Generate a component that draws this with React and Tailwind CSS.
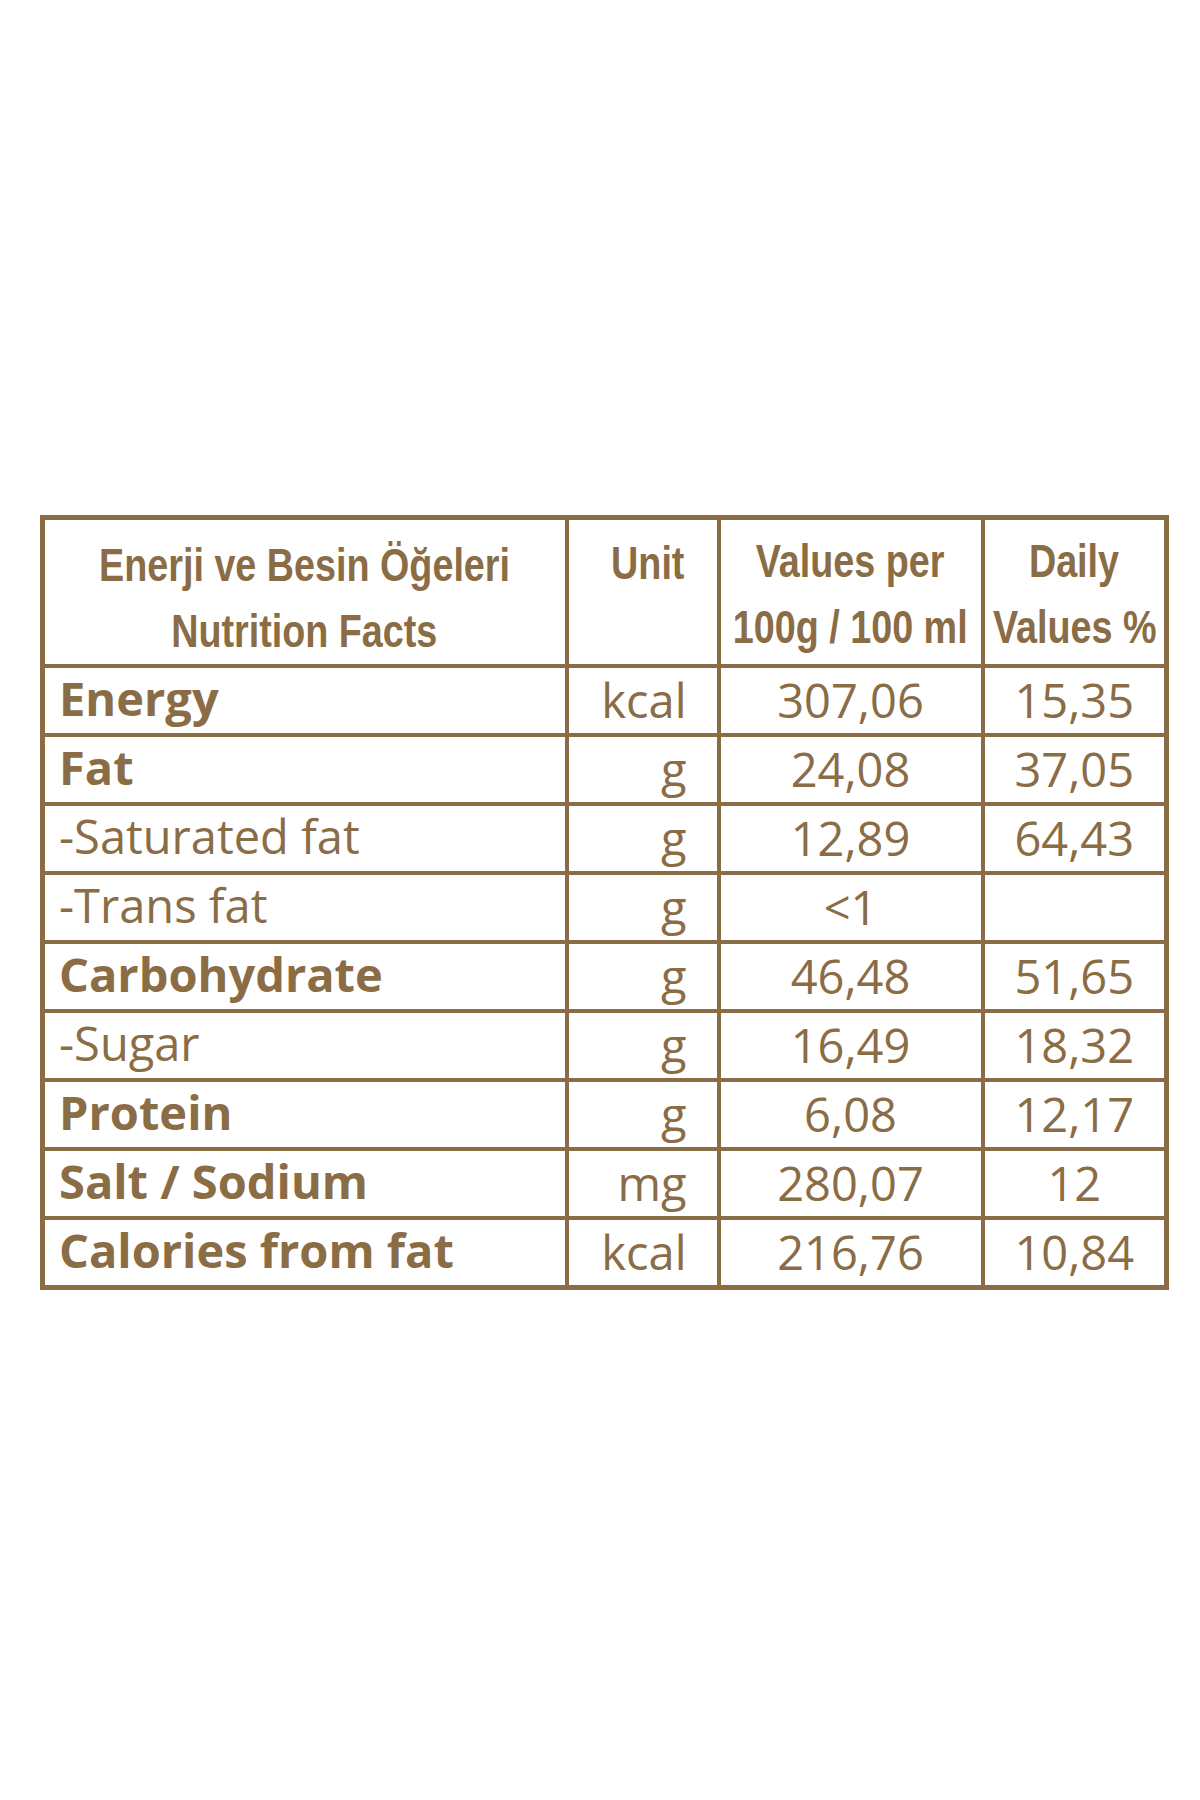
const rows = [
  { label: 'Energy', bold: true, unit: 'kcal', value: '307,06', daily: '15,35' },
  { label: 'Fat', bold: true, unit: 'g', value: '24,08', daily: '37,05' },
  { label: '-Saturated fat', bold: false, unit: 'g', value: '12,89', daily: '64,43' },
  { label: '-Trans fat', bold: false, unit: 'g', value: '<1', daily: '' },
  { label: 'Carbohydrate', bold: true, unit: 'g', value: '46,48', daily: '51,65' },
  { label: '-Sugar', bold: false, unit: 'g', value: '16,49', daily: '18,32' },
  { label: 'Protein', bold: true, unit: 'g', value: '6,08', daily: '12,17' },
  { label: 'Salt / Sodium', bold: true, unit: 'mg', value: '280,07', daily: '12' },
  { label: 'Calories from fat', bold: true, unit: 'kcal', value: '216,76', daily: '10,84' },
];

// condensed header line: Liberation Sans Bold squeezed horizontally
function Narrow({ children, right }) {
  return (
    <span
      className={
        right
          ? 'inline-block whitespace-nowrap scale-x-[0.82] origin-right'
          : 'inline-block whitespace-nowrap scale-x-[0.82]'
      }
    >
      {children}
    </span>
  );
}

export default function App() {
  return (
    <div className="w-full h-[1800px] bg-white pt-[515px] pl-[40px] text-[#8a6c45]">
      <table className="w-[1124px] border-collapse border-[5px] border-[#8a6c45] table-fixed">
        <colgroup>
          <col className="w-[524px]" />
          <col className="w-[152px]" />
          <col className="w-[264px]" />
          <col className="w-[184px]" />
        </colgroup>
        <thead>
          <tr className="h-[142px] font-['Liberation_Sans',Arial,sans-serif] font-bold text-[46px] leading-[66px]">
            <th className="border-[4px] border-[#8a6c45] align-top p-0 font-bold">
              <div className="flex flex-col items-center pt-[12px]">
                <Narrow>Enerji ve Besin Öğeleri</Narrow>
                <Narrow>Nutrition Facts</Narrow>
              </div>
            </th>
            <th className="border-[4px] border-[#8a6c45] align-top p-0 font-bold">
              <div className="flex flex-col items-end pt-[10px] pr-[32px]">
                <Narrow right>Unit</Narrow>
              </div>
            </th>
            <th className="border-[4px] border-[#8a6c45] align-top p-0 font-bold">
              <div className="flex flex-col items-center pt-[8px]">
                <Narrow>Values per</Narrow>
                <Narrow>100g / 100 ml</Narrow>
              </div>
            </th>
            <th className="border-[4px] border-[#8a6c45] align-top p-0 font-bold">
              <div className="flex flex-col items-center pt-[8px]">
                <Narrow>Daily</Narrow>
                <Narrow>Values %</Narrow>
              </div>
            </th>
          </tr>
        </thead>
        <tbody className="font-['Open_Sans',sans-serif] text-[47px] leading-none">
          {rows.map((r) => (
            <tr key={r.label} className="h-[69px]">
              <td
                className={
                  r.bold
                    ? 'border-[4px] border-[#8a6c45] pl-[14px] pb-[4px] font-bold whitespace-nowrap'
                    : 'border-[4px] border-[#8a6c45] pl-[14px] pb-[4px] whitespace-nowrap'
                }
              >
                {r.label}
              </td>
              <td className="border-[4px] border-[#8a6c45] text-right pr-[30px]">{r.unit}</td>
              <td className="border-[4px] border-[#8a6c45] text-center">{r.value}</td>
              <td className="border-[4px] border-[#8a6c45] text-center">{r.daily}</td>
            </tr>
          ))}
        </tbody>
      </table>
    </div>
  );
}
